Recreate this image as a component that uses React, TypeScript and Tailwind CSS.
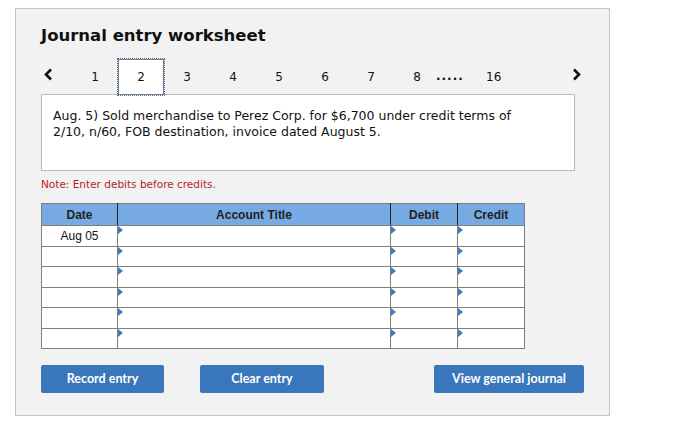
import React from 'react';

const tabs = ['1', '2', '3', '4', '5', '6', '7', '8'];

// Marker drawn in the top-left corner of the editable cells
const Marker = () => (
  <svg width="5" height="8" viewBox="0 0 5 8" className="absolute left-0 top-0">
    <path d="M0 0 L5 4 L0 8 Z" fill="#3b7bc8" />
  </svg>
);

const Chevron = ({ dir }: { dir: 'left' | 'right' }) => (
  <svg width="9" height="13" viewBox="0 0 9 13">
    <path
      d={dir === 'left' ? 'M7 1.5 L2 6.5 L7 11.5' : 'M2 1.5 L7 6.5 L2 11.5'}
      fill="none"
      stroke="#111"
      strokeWidth="2.6"
    />
  </svg>
);

const rows = ['Aug 05', '', '', '', '', ''];

export default function App() {
  return (
    <div className="w-[675px] h-[437px] bg-white pt-2 pl-[15px]" style={{ fontFamily: '"DejaVu Sans", Verdana, sans-serif' }}>
      <div className="w-[595px] h-[408px] border border-[#c4c4c4] bg-[#f2f2f2] pl-[25px] pt-[17px]">
        <h1 className="text-[16.5px] leading-5 font-bold text-[#111]">Journal entry worksheet</h1>

        {/* Tab bar */}
        <div className="relative z-10 mt-[13px] flex h-9 items-center text-[12px] text-[#111]">
          <span className="w-[31px] pl-[3px] pb-[5px]"><Chevron dir="left" /></span>
          {tabs.map((t) =>
            t === '2' ? (
              <div key={t} className="flex h-9 w-[46px] items-center justify-center border border-[#7a7a7a] bg-white outline outline-1 outline-dotted outline-[#3b6fb0]">
                {t}
              </div>
            ) : (
              <div key={t} className="flex h-9 w-[46px] items-center justify-center">
                {t}
              </div>
            )
          )}
          <span className="ml-[-4px] w-[50px] pb-[2px] font-bold tracking-[1px]">.....</span>
          <span className="w-[14px]">16</span>
          <span className="ml-[72px] pb-[5px]"><Chevron dir="right" /></span>
        </div>

        {/* Question box */}
        <div className="-mt-[1px] h-[77px] w-[534px] border border-[#b9b9b9] bg-white pl-[11px] pt-[13px] text-[12.5px] leading-4 text-[#111]">
          Aug. 5) Sold merchandise to Perez Corp. for $6,700 under credit terms of
          <br />
          2/10, n/60, FOB destination, invoice dated August 5.
        </div>

        <p className="mt-[5px] text-[10.5px] leading-4 text-[#b3262b]">Note: Enter debits before credits.</p>

        {/* Journal table */}
        <table className="mt-[11px] border-collapse text-[12px]" style={{ fontFamily: '"Liberation Sans", Arial, sans-serif' }}>
          <thead>
            <tr className="h-[22px] bg-[#77aae3] font-bold text-[#222]">
              <th className="w-[76px] border border-[#7f7f7f] border-r-[#222] font-bold">Date</th>
              <th className="w-[273px] border border-[#7f7f7f] border-r-[#222] font-bold">Account Title</th>
              <th className="w-[67px] border border-[#7f7f7f] border-r-[#222] font-bold">Debit</th>
              <th className="w-[67px] border border-[#7f7f7f] font-bold">Credit</th>
            </tr>
          </thead>
          <tbody className="bg-white">
            {rows.map((d, i) => (
              <tr key={i} className="h-[20.5px]">
                <td className="border border-[#7f7f7f] text-center text-[#111]">{d}</td>
                <td className="relative border border-[#7f7f7f]"><Marker /></td>
                <td className="relative border border-[#7f7f7f]"><Marker /></td>
                <td className="relative border border-[#7f7f7f]"><Marker /></td>
              </tr>
            ))}
          </tbody>
        </table>

        {/* Actions */}
        <div className="mt-[16px] flex w-[543px] text-[12.5px] font-bold text-white" style={{ fontFamily: 'Lato, "Open Sans", sans-serif' }}>
          <button className="h-7 w-[123px] rounded-[2px] bg-[#3a76bb]">Record entry</button>
          <button className="ml-[36px] h-7 w-[124px] rounded-[2px] bg-[#3a76bb]">Clear entry</button>
          <button className="ml-auto h-7 w-[150px] rounded-[2px] bg-[#3a76bb]">View general journal</button>
        </div>
      </div>
    </div>
  );
}
